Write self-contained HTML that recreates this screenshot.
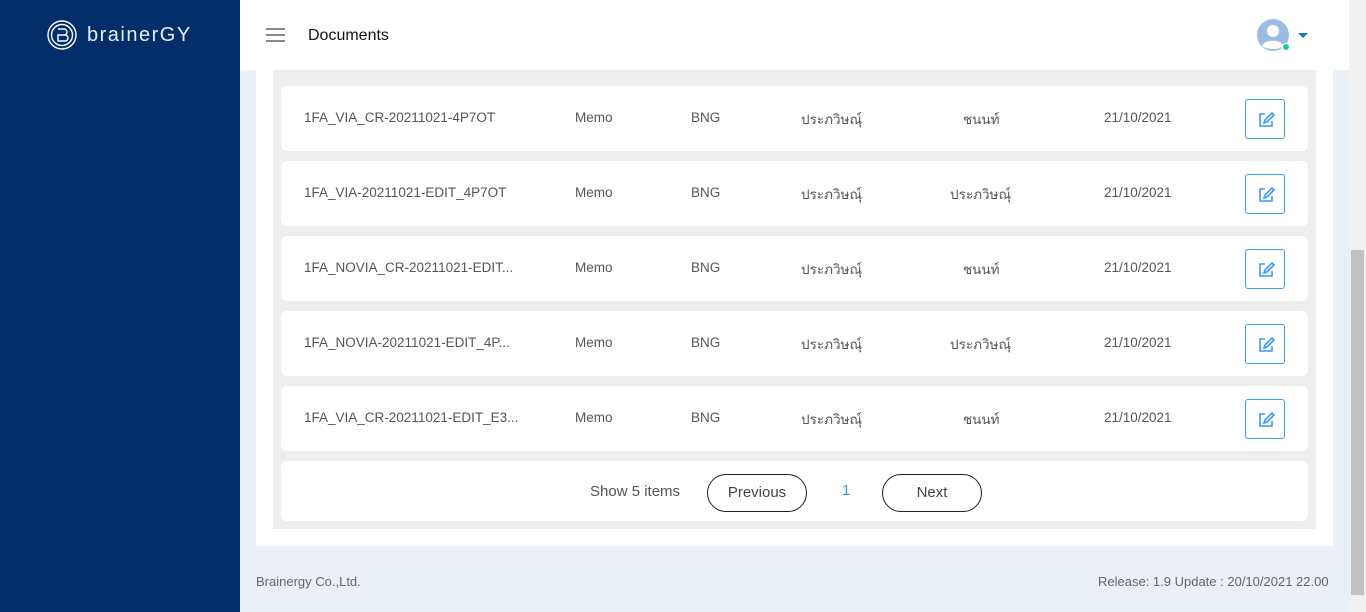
<!DOCTYPE html>
<html><head><meta charset="utf-8"><style>
*{margin:0;padding:0;box-sizing:border-box}
body{width:1366px;height:612px;overflow:hidden;background:#ebeff6;font-family:"Liberation Sans","Noto Sans CJK SC",sans-serif;position:relative;color:#555}
.side{position:absolute;left:0;top:0;width:240px;height:612px;background:#022f6a}
.logo{position:absolute;left:47px;top:20px;display:flex;align-items:center;color:#fff}
.logo span{font-size:20px;letter-spacing:1.5px;margin-left:10px;color:#e8eef6}
.hdr{position:absolute;left:240px;top:0;width:1109px;height:70px;background:#fff}
.ham{position:absolute;left:26px;top:28px;width:19px}
.ham i{display:block;height:2px;background:#888;margin-bottom:4px}
.title{position:absolute;left:68px;top:27px;font-size:16px;color:#111}
.sb{position:absolute;left:1349px;top:0;width:17px;height:612px;background:#f1f1f1}
.thumb{position:absolute;left:1351px;top:250px;width:13px;height:345px;background:#c1c1c1}
.card{position:absolute;left:256px;top:70px;width:1077px;height:476px;background:#fff}
.panel{position:absolute;left:273px;top:70px;width:1043px;height:459px;background:#eeeeee}
.row{position:absolute;left:281px;width:1027px;height:65px;background:#fff;border-radius:6px;font-size:13.5px;color:#555}
.row span{position:absolute;top:24px;white-space:nowrap}
.row span.t{top:22px}
.ed{position:absolute;left:964px;top:13px;width:40px;height:40px;border:1px solid #3b97f4;border-radius:3px}
.pg{position:absolute;left:281px;top:461px;width:1027px;height:60px;background:#fff;border-radius:6px}
.btn{position:absolute;top:13px;width:100px;height:38px;border:1.3px solid #222;border-radius:19px;text-align:center;line-height:36px;font-size:15px;color:#444}
.foot{position:absolute;top:574px;font-size:13px;color:#666}
</style></head><body>
<div class="side"><div class="logo">
<svg width="30" height="30" viewBox="0 0 30 30" fill="none" stroke="#fff" stroke-width="1.4"><circle cx="15" cy="15" r="14"/><circle cx="15" cy="15" r="10.5"/><path d="M11 9h6a3 3 0 0 1 0 6h-6M11 15h7a3 3 0 0 1 0 6h-7z"/></svg>
<span>brainerGY</span></div></div>
<div class="hdr"><div class="ham"><i></i><i></i><i></i></div><div class="title">Documents</div>
<svg style="position:absolute;left:1017px;top:19px" width="34" height="34" viewBox="0 0 34 34"><circle cx="16" cy="16" r="16" fill="#9bbde0"/><circle cx="16" cy="12" r="6" fill="#fff"/><path d="M5 27c2-7 20-7 22 0c-5 4-17 4-22 0z" fill="#fff"/><circle cx="29" cy="28" r="3.5" fill="#22c9a0" stroke="#fff"/></svg>
<div style="position:absolute;left:1058px;top:33px;border-left:5px solid transparent;border-right:5px solid transparent;border-top:5px solid #1a73d8"></div>
</div>
<div class="sb"></div><div class="thumb"></div>
<div class="card"></div><div class="panel"></div>

<div class="row" style="top:86px"><span style="left:23px">1FA_VIA_CR-20211021-4P7OT</span><span style="left:294px">Memo</span><span style="left:410px">BNG</span><span class="t" style="left:520px">ประภวิษณุ์</span><span class="t" style="left:682px">ชนนท์</span><span style="left:823px">21/10/2021</span><div class="ed"><svg width="40" height="40" viewBox="0 0 40 40" fill="none" stroke="#3b97f4" stroke-width="1.6"><path d="M19 14h-5v12h12v-5"/><path d="M18 23l1-3 7-7 2 2-7 7z"/></svg></div></div>
<div class="row" style="top:161px"><span style="left:23px">1FA_VIA-20211021-EDIT_4P7OT</span><span style="left:294px">Memo</span><span style="left:410px">BNG</span><span class="t" style="left:520px">ประภวิษณุ์</span><span class="t" style="left:669px">ประภวิษณุ์</span><span style="left:823px">21/10/2021</span><div class="ed"><svg width="40" height="40" viewBox="0 0 40 40" fill="none" stroke="#3b97f4" stroke-width="1.6"><path d="M19 14h-5v12h12v-5"/><path d="M18 23l1-3 7-7 2 2-7 7z"/></svg></div></div>
<div class="row" style="top:236px"><span style="left:23px">1FA_NOVIA_CR-20211021-EDIT...</span><span style="left:294px">Memo</span><span style="left:410px">BNG</span><span class="t" style="left:520px">ประภวิษณุ์</span><span class="t" style="left:682px">ชนนท์</span><span style="left:823px">21/10/2021</span><div class="ed"><svg width="40" height="40" viewBox="0 0 40 40" fill="none" stroke="#3b97f4" stroke-width="1.6"><path d="M19 14h-5v12h12v-5"/><path d="M18 23l1-3 7-7 2 2-7 7z"/></svg></div></div>
<div class="row" style="top:311px"><span style="left:23px">1FA_NOVIA-20211021-EDIT_4P...</span><span style="left:294px">Memo</span><span style="left:410px">BNG</span><span class="t" style="left:520px">ประภวิษณุ์</span><span class="t" style="left:669px">ประภวิษณุ์</span><span style="left:823px">21/10/2021</span><div class="ed"><svg width="40" height="40" viewBox="0 0 40 40" fill="none" stroke="#3b97f4" stroke-width="1.6"><path d="M19 14h-5v12h12v-5"/><path d="M18 23l1-3 7-7 2 2-7 7z"/></svg></div></div>
<div class="row" style="top:386px"><span style="left:23px">1FA_VIA_CR-20211021-EDIT_E3...</span><span style="left:294px">Memo</span><span style="left:410px">BNG</span><span class="t" style="left:520px">ประภวิษณุ์</span><span class="t" style="left:682px">ชนนท์</span><span style="left:823px">21/10/2021</span><div class="ed"><svg width="40" height="40" viewBox="0 0 40 40" fill="none" stroke="#3b97f4" stroke-width="1.6"><path d="M19 14h-5v12h12v-5"/><path d="M18 23l1-3 7-7 2 2-7 7z"/></svg></div></div>

<div class="pg"><span style="position:absolute;left:309px;top:22px;font-size:15px;color:#555">Show 5 items</span>
<div class="btn" style="left:426px">Previous</div>
<span style="position:absolute;left:561px;top:21px;font-size:15px;color:#3b97f4">1</span>
<div class="btn" style="left:601px">Next</div></div>
<div class="foot" style="left:256px">Brainergy Co.,Ltd.</div>
<div class="foot" style="left:1098px">Release: 1.9 Update : 20/10/2021 22.00</div>
</body></html>
